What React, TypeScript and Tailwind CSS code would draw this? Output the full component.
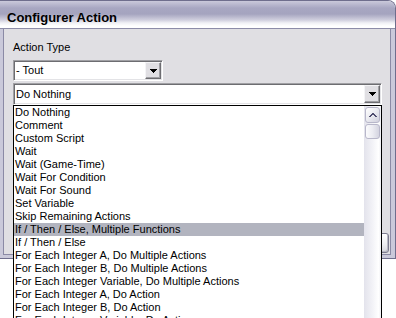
import React from "react";

const actions = [
  "Do Nothing",
  "Comment",
  "Custom Script",
  "Wait",
  "Wait (Game-Time)",
  "Wait For Condition",
  "Wait For Sound",
  "Set Variable",
  "Skip Remaining Actions",
  "If / Then / Else, Multiple Functions",
  "If / Then / Else",
  "For Each Integer A, Do Multiple Actions",
  "For Each Integer B, Do Multiple Actions",
  "For Each Integer Variable, Do Multiple Actions",
  "For Each Integer A, Do Action",
  "For Each Integer B, Do Action",
  "For Each Integer Variable, Do Action",
];

const DownArrow = () => (
  <svg width="7" height="4" viewBox="0 0 7 4" className="block">
    <path d="M0 0h7v1H0zM1 1h5v1H1zM2 2h3v1H2zM3 3h1v1H3z" fill="#000" />
  </svg>
);

const UpChevron = () => (
  <svg width="8" height="4" viewBox="0 0 8 4" className="block">
    <path d="M3 0h2v1H3zM2 1h4v1H2zM1 2h2v1H1zM5 2h2v1H5zM0 3h2v1H0zM6 3h2v1H6z" fill="#4d4b6e" />
  </svg>
);

const DropButton = () => (
  <div className="w-[16px] h-full flex items-center justify-center bg-[#e0dfe3] border border-t-[#f4f4f6] border-l-[#f4f4f6] border-r-[#6d6d71] border-b-[#6d6d71] shadow-[inset_-1px_-1px_0_#a0a0a4]">
    <DownArrow />
  </div>
);

interface ComboProps {
  value: string;
  className?: string;
}

const Combo = ({ value, className }: ComboProps) => (
  <div
    className={`flex p-[1px] bg-white border border-t-[#a0a0a4] border-l-[#a0a0a4] border-r-white border-b-white shadow-[inset_1px_1px_0_#6d6d71,inset_-1px_-1px_0_#e3e3e6] ${className ?? ""}`}
  >
    <div className="flex-1 flex items-center pl-[1px] whitespace-nowrap">{value}</div>
    <DropButton />
  </div>
);

const ActionList = () => (
  <div className="absolute left-[13px] top-[105px] w-[369px] h-[240px] flex bg-white border border-black">
    <div className="flex-1 flex flex-col">
      {actions.map((a, i) => (
        <div
          key={a}
          className={`h-[13px] shrink-0 pl-[1px] whitespace-nowrap overflow-hidden ${i === 9 ? "bg-[#b2b4bf]" : ""}`}
        >
          {a}
        </div>
      ))}
    </div>
    <div className="w-[17px] flex flex-col bg-[linear-gradient(to_right,#e3e3ec,#f4f4f8_55%,#ffffff_85%,#f0f0f4)]">
      <div className="h-[16px] mt-[1px] mx-[1px] rounded-[3px] border border-[#b8b7ca] bg-[linear-gradient(135deg,#ffffff,#eaeaf0_50%,#d0d0dd)] flex items-center justify-center">
        <UpChevron />
      </div>
      <div className="h-[15px] mt-[1px] mx-[1px] rounded-[3px] border border-[#b8b7ca] bg-[linear-gradient(to_right,#fbfbfd,#ececf2_50%,#d4d4e0)]" />
    </div>
  </div>
);

export default function App() {
  return (
    <div className="relative w-[396px] h-[318px] overflow-hidden bg-white text-black text-[11px] leading-[13px] font-['Liberation_Sans',Arial,sans-serif]">
      <div className="w-[396px] h-[259px] flex flex-col rounded-tr-[8px] overflow-hidden border-t border-r border-b border-[#6f6e8d]">
        <div className="h-[28px] shrink-0 pl-[7px] pt-[9px] border-b border-[#8d8ca8] bg-[linear-gradient(to_bottom,#cac9db_0px,#a8a7c2_7px,#a5a4bf_13px,#d0cfde_19px,#f1f1f5_22px,#ffffff_25px)]">
          <span className="block font-bold text-[13px] leading-[15px]">Configurer Action</span>
        </div>
        <div className="flex-1 flex bg-[#cac9da] pl-[3px] pr-[4px] pb-[3px]">
          <div className="flex-1 flex flex-col bg-[#e0dfe3] border-l border-r border-b border-[#8b8aa5] pt-[12px] pl-[9px] pb-[1px] pr-[1px]">
            <div>Action Type</div>
            <Combo value="- Tout" className="mt-[6px] w-[150px] h-[21px]" />
            <Combo value="Do Nothing" className="mt-[2px] w-[369px] h-[22px]" />
            <div className="flex-1" />
            <div className="flex justify-end">
              <div className="w-[75px] h-[20px] rounded-[3px] border border-[#7c7b8f] bg-[linear-gradient(to_bottom,#ffffff,#ececf0_60%,#d6d6de)] shadow-[inset_-1px_-1px_0_#b9b9c4]" />
            </div>
          </div>
        </div>
      </div>
      <ActionList />
    </div>
  );
}
